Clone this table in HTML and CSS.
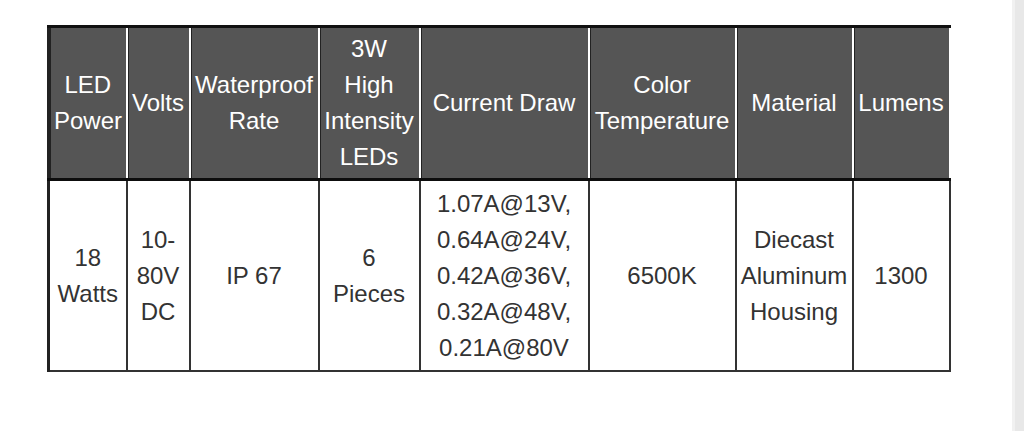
FILE: index.html
```html
<!DOCTYPE html>
<html lang="en">
<head>
<meta charset="utf-8">
<title>LED Specifications</title>
<link rel="stylesheet" href="styles.css">
</head>
<body>
<div class="page">
  <main class="content">
    <table class="spec">
      <colgroup>
        <col class="c1"><col class="c2"><col class="c3"><col class="c4">
        <col class="c5"><col class="c6"><col class="c7"><col class="c8">
      </colgroup>
      <thead>
        <tr>
          <th>LED Power</th>
          <th>Volts</th>
          <th>Waterproof Rate</th>
          <th>3W High Intensity LEDs</th>
          <th>Current Draw</th>
          <th>Color Temperature</th>
          <th>Material</th>
          <th>Lumens</th>
        </tr>
      </thead>
      <tbody>
        <tr>
          <td>18 Watts</td>
          <td>10-80V DC</td>
          <td>IP 67</td>
          <td>6 Pieces</td>
          <td>1.07A@13V, 0.64A@24V, 0.42A@36V, 0.32A@48V, 0.21A@80V</td>
          <td>6500K</td>
          <td>Diecast Aluminum Housing</td>
          <td>1300</td>
        </tr>
      </tbody>
    </table>
  </main>
  <div class="scrolltrack"></div>
</div>
</body>
</html>
```

FILE: styles.css
```css
html, body {
  margin: 0;
  padding: 0;
  background: #ffffff;
}

.page {
  display: flex;
  height: 431px;
  overflow: hidden;
}

.content {
  flex: 1;
  padding: 25px 0 0 47px;
}

.scrolltrack {
  width: 9px;
  border-left: 3px solid #f1f1f1;
  background: #e8e8e8;
}

.spec {
  border-collapse: collapse;
  table-layout: fixed;
  width: 903px;
  font-family: "Liberation Sans", Arial, sans-serif;
  font-size: 24px;
  line-height: 36px;
  text-align: center;
  border-top: 3px solid #111111;
  border-left: 3px solid #222222;
  border-right: 2px solid #333333;
  border-bottom: 2px solid #333333;
}

.c1 { width: 78px; }
.c2 { width: 63px; }
.c3 { width: 129px; }
.c4 { width: 101px; }
.c5 { width: 169px; }
.c6 { width: 147px; }
.c7 { width: 117px; }
.c8 { width: 97px; }

.spec th {
  background: #555555;
  color: #ffffff;
  font-weight: normal;
  padding: 3px 4px;
  vertical-align: middle;
  border-left: 2px solid #ffffff;
  border-right: 2px solid #ffffff;
  border-bottom: 3px solid #0d0d0d;
  box-shadow: inset 1px 0 0 #222222;
}

.spec td {
  color: #333333;
  padding: 5px 4px 4px;
  vertical-align: middle;
  border-left: 2px solid #333333;
  border-right: 2px solid #333333;
}
```
